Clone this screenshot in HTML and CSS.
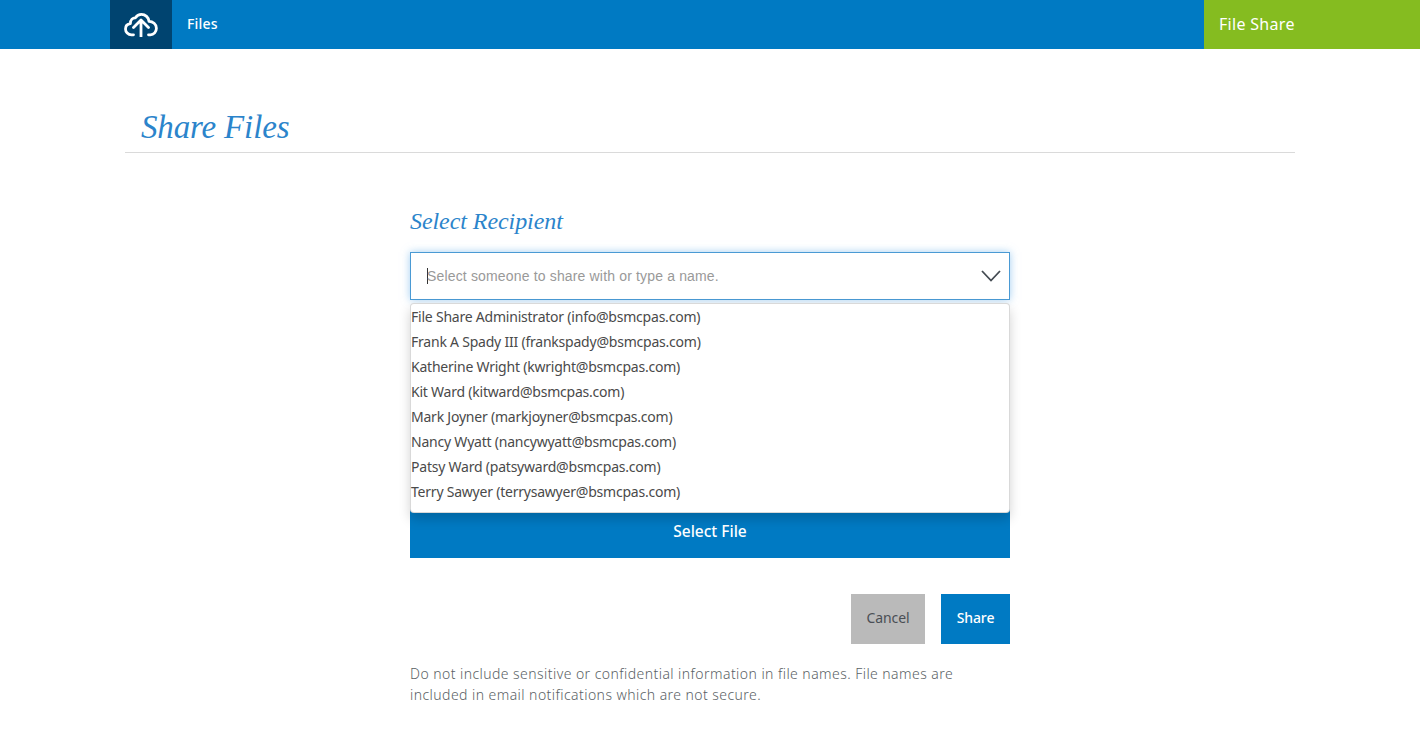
FILE: index.html
```html
<!DOCTYPE html>
<html lang="en">
<head>
<meta charset="utf-8">
<title>Share Files</title>
<link rel="stylesheet" href="styles.css">
</head>
<body>
<header class="topbar">
  <a class="logo" href="#" aria-label="Home">
    <svg width="34" height="24" viewBox="0 0 34 24" fill="none" stroke="#fff" stroke-width="2.800" stroke-linejoin="round" stroke-linecap="round">
      <path d="M9.500 21.800H7.500C4 21.800 1.500 19 1.500 16C1.500 13 3.600 10.900 6.400 10.600C6.200 6.600 9 4.600 11.400 4.800C12.800 2.600 15 1.400 17.400 1.400C21.400 1.400 24.600 4.400 25 8.400C28.800 8.400 32.400 11.200 32.400 15.200C32.400 18.800 29.800 21.800 26.400 21.800H24.500"/>
      <path d="M17 23.500V8M9.500 14.500L17 7L24.500 14.500"/>
    </svg>
  </a>
  <nav class="nav"><a class="nav-link" href="#">Files</a></nav>
  <div class="product">File Share</div>
</header>
<main class="page">
  <h1 class="title">Share Files</h1>
  <form class="form">
    <h2 class="label">Select Recipient</h2>
    <div class="combo">
      <div class="field">
        <span class="caret"></span><span class="placeholder">Select someone to share with or type a name.</span>
        <svg class="chevron" width="20" height="12" viewBox="0 0 20 12" fill="none" stroke="#444b52" stroke-width="1.800"><path d="M1 1L10 10.500L19 1"/></svg>
      </div>
      <ul class="menu">
        <li>File Share Administrator (info@bsmcpas.com)</li>
        <li>Frank A Spady III (frankspady@bsmcpas.com)</li>
        <li>Katherine Wright (kwright@bsmcpas.com)</li>
        <li>Kit Ward (kitward@bsmcpas.com)</li>
        <li>Mark Joyner (markjoyner@bsmcpas.com)</li>
        <li>Nancy Wyatt (nancywyatt@bsmcpas.com)</li>
        <li>Patsy Ward (patsyward@bsmcpas.com)</li>
        <li>Terry Sawyer (terrysawyer@bsmcpas.com)</li>
      </ul>
    </div>
    <button class="select-file" type="button">Select File</button>
    <div class="actions">
      <button class="btn btn-cancel" type="button">Cancel</button>
      <button class="btn btn-share" type="button">Share</button>
    </div>
    <p class="note">Do not include sensitive or confidential information in file names. File names are<br>included in email notifications which are not secure.</p>
  </form>
</main>
</body>
</html>
```
FILE: styles.css
```css
* { box-sizing: border-box; }
html, body { margin: 0; padding: 0; }
body {
  background: #fff;
  font-family: "Noto Sans", "Open Sans", sans-serif;
  color: #4a4f55;
  height: 740px;
  overflow: hidden;
}
.topbar {
  display: flex;
  height: 49px;
  background: #007ac3;
  padding-left: 110px;
}
.logo {
  display: flex;
  align-items: center;
  justify-content: center;
  width: 62px;
  background: #004470;
}
.nav { flex: 1; display: flex; align-items: center; padding-left: 15px; }
.nav-link {
  color: #fff;
  text-decoration: none;
  font-size: 14px;
  font-weight: 500;
  letter-spacing: 0.2px;
  margin-bottom: 2px;
}
.product {
  width: 216px;
  background: #85bc20;
  color: #fff;
  font-size: 16px;
  letter-spacing: 0.3px;
  line-height: 49px;
  padding-left: 15px;
}
.page { width: 1170px; margin: 0 auto; }
.title {
  margin: 0;
  height: 104px;
  padding: 58px 0 0 16px;
  border-bottom: 1px solid #dadada;
  font: italic 400 33px/40px "Liberation Serif", serif;
  letter-spacing: -0.15px;
  color: #2b84cb;
}
.form { width: 600px; margin: 0 auto; padding-top: 52px; }
.label {
  margin: 0 0 15px;
  font: italic 400 24px/32px "Liberation Serif", serif;
  letter-spacing: -0.07px;
  color: #2b84cb;
}
.combo { position: relative; height: 253px; }
.field {
  display: flex;
  align-items: center;
  height: 48px;
  padding-left: 16px;
  background: #fff;
  border: 1px solid #4a9ad4;
  box-shadow: 0 0 8px rgba(102, 175, 233, .6);
}
.caret { width: 1px; height: 16px; margin-right: -1px; background: #333; }
.placeholder { font: 14px "Liberation Sans", sans-serif; color: #999; letter-spacing: 0.16px; }
.chevron { margin-left: auto; margin-right: 8px; }
.menu {
  position: absolute;
  left: 0;
  right: 0;
  top: 51px;
  height: 210px;
  margin: 0;
  padding: 0 0 10px;
  list-style: none;
  background: #fff;
  border: 1px solid rgba(0, 0, 0, .15);
  border-radius: 4px;
  box-shadow: 0 6px 12px rgba(0, 0, 0, .175);
  z-index: 2;
}
.menu li {
  height: 25px;
  line-height: 25px;
  font-size: 14px;
  letter-spacing: -0.22px;
  color: #4a4a4a;
  white-space: nowrap;
}
.select-file {
  display: block;
  width: 100%;
  height: 53px;
  border: 0;
  background: #007ac3;
  color: #fff;
  font: 500 15.500px "Noto Sans", sans-serif;
  padding: 0 0 2px;
}
.actions { display: flex; justify-content: flex-end; gap: 16px; margin-top: 36px; }
.btn { height: 50px; border: 0; padding: 0 0 3px; font: 500 14px "Noto Sans", sans-serif; letter-spacing: -0.1px; }
.btn-cancel { width: 74px; background: #bababa; color: #4a4f55; font-weight: 400; }
.btn-share { width: 69px; background: #007ac3; color: #fff; }
.note {
  margin: 19px 0 0;
  font-size: 14px;
  line-height: 21px;
  font-weight: 300;
  color: #5a5f65;
  letter-spacing: 0.44px;
}
```
